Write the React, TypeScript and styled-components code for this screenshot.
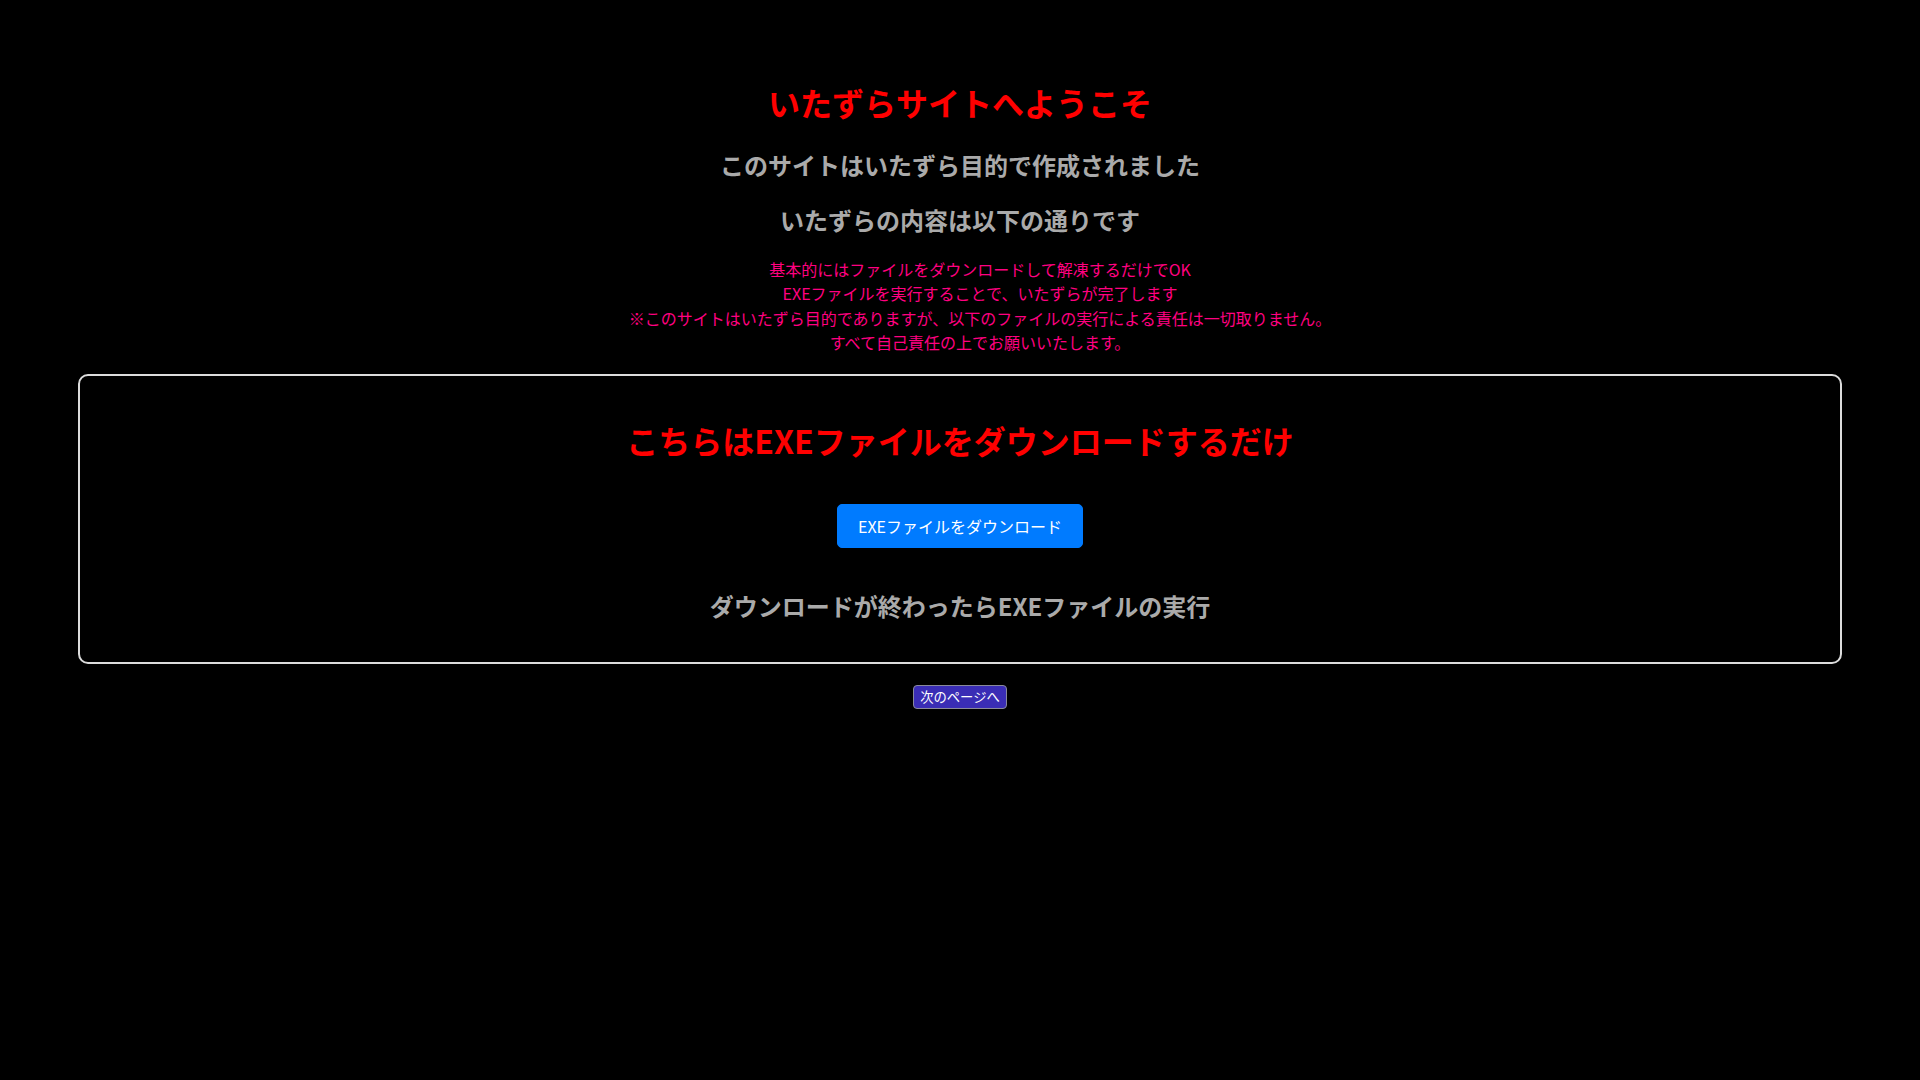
import React from 'react';
import styled, { createGlobalStyle } from 'styled-components';

const GlobalStyle = createGlobalStyle`
    html, body {
        margin: 0;
        padding: 0;
        background: #000;
    }

    body {
        font-family: 'Noto Sans CJK JP', 'Noto Sans', sans-serif;
    }
`;

const Page = styled.div`
    display: flex;
    flex-direction: column;
    align-items: center;
    padding: 82px 78px 0;
    min-height: 100vh;
    box-sizing: border-box;
    text-align: center;
`;

const Title = styled.h1`
    margin: 0;
    font-size: 32px;
    line-height: 40px;
    font-weight: 700;
    color: #ff0000;
`;

const Lead = styled.h2<{ $top: number }>`
    margin: ${(p) => p.$top}px 0 0;
    font-size: 24px;
    line-height: 32px;
    font-weight: 700;
    color: #aaaaaa;
`;

const Notice = styled.p`
    margin: 21px 0 0;
    padding-left: 40px;
    font-size: 16px;
    line-height: 24.4px;
    color: #ff0080;
`;

const Panel = styled.section`
    display: flex;
    flex-direction: column;
    align-items: center;
    align-self: stretch;
    margin-top: 19px;
    padding: 44px 20px 40px;
    border: 2px solid #dcdcdc;
    border-radius: 10px;
`;

const PanelTitle = styled.h2`
    margin: 0;
    font-size: 32px;
    line-height: 40px;
    font-weight: 700;
    color: #ff0000;
`;

const DownloadButton = styled.button`
    margin-top: 44px;
    padding: 9px 20px;
    border: 1px solid #007bff;
    border-radius: 5px;
    background: #007bff;
    color: #fff;
    font-family: inherit;
    font-size: 16px;
    line-height: 24px;
    cursor: pointer;
`;

const PanelText = styled.h3`
    margin: 42px 0 0;
    font-size: 24px;
    line-height: 32px;
    font-weight: 700;
    color: #aaaaaa;
`;

const NextButton = styled.button`
    margin-top: 21px;
    padding: 1px 6px;
    border: 1px solid #8a8a9a;
    border-radius: 4px;
    background: #3a2db5;
    color: #fff;
    font-family: inherit;
    font-size: 13.33px;
    line-height: 20px;
    cursor: pointer;
`;

export default function App() {
    return (
        <>
            <GlobalStyle />
            <Page>
                <Title>いたずらサイトへようこそ</Title>
                <Lead $top={27}>このサイトはいたずら目的で作成されました</Lead>
                <Lead $top={23}>いたずらの内容は以下の通りです</Lead>
                <Notice>
                    基本的にはファイルをダウンロードして解凍するだけでOK
                    <br />
                    EXEファイルを実行することで、いたずらが完了します
                    <br />
                    ※このサイトはいたずら目的でありますが、以下のファイルの実行による責任は一切取りません。
                    <br />
                    すべて自己責任の上でお願いいたします。
                </Notice>
                <Panel>
                    <PanelTitle>こちらはEXEファイルをダウンロードするだけ</PanelTitle>
                    <DownloadButton type="button">EXEファイルをダウンロード</DownloadButton>
                    <PanelText>ダウンロードが終わったらEXEファイルの実行</PanelText>
                </Panel>
                <NextButton type="button">次のページへ</NextButton>
            </Page>
        </>
    );
}
